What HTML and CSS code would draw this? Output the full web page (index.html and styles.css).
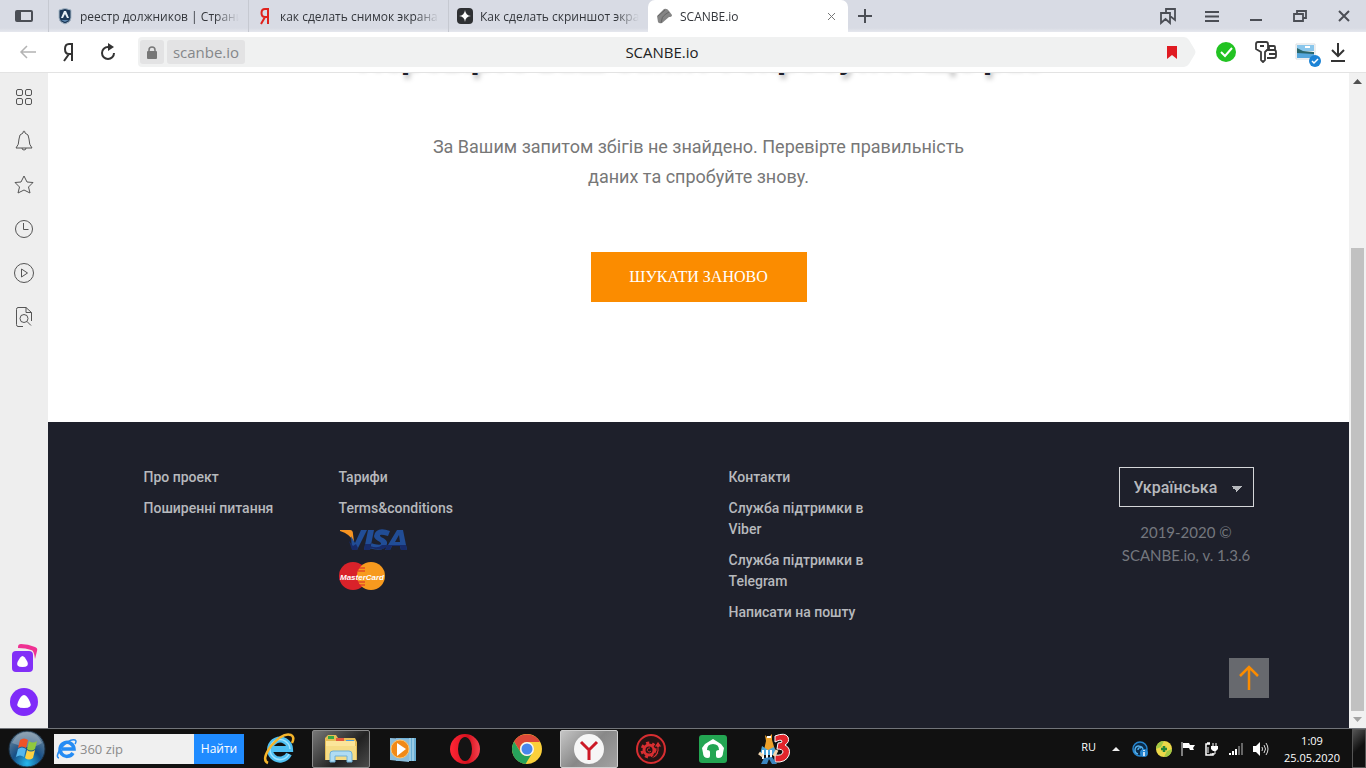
FILE: index.html
```
<!DOCTYPE html>
<html lang="uk">
<head>
    <meta charset="UTF-8">
    <meta name="viewport" content="width=device-width, initial-scale=1.0">
    <title>SCANBE.io</title>
    <link rel="stylesheet" href="styles.css">
</head>
<body>
    <!-- Tabs -->
    <header class="tabs">
        <button class="tabs-panel" aria-label="Панель">
            <svg width="18" height="12" viewBox="0 0 18 12"><rect x="1" y="1" width="16" height="10" rx="1" fill="none" stroke="#4b4e55" stroke-width="2"/><path d="M1 1h5v10H1z" fill="#4b4e55"/></svg>
        </button>
        <a class="tab" href="#">
            <svg width="16" height="16" viewBox="0 0 16 16"><path d="M2 2q6-3 12 0v8q0 4-6 6-6-2-6-6z" fill="#1d3858" stroke="#a9bac8"/><path d="M4 10l3-7h2l3 7h-2l-2-4-2 4z" fill="#e6eef5"/><path d="M4 12h8l-4 2z" fill="#5d86ad"/></svg>
            <span>реестр должников | Страница</span>
        </a>
        <a class="tab" href="#">
            <svg width="16" height="16" viewBox="0 0 16 16"><path d="M11 0v16M11 1H8Q4.500 1 4.500 5T8 9h3M8 9l-4 7" fill="none" stroke="#e0221c" stroke-width="2"/></svg>
            <span>как сделать снимок экрана на</span>
        </a>
        <a class="tab" href="#">
            <svg width="16" height="16" viewBox="0 0 16 16"><rect width="16" height="16" rx="4" fill="#2e3033"/><path d="M8 2q.5 5.500 6 6-5.500.5-6 6-.5-5.500-6-6 5.500-.5 6-6z" fill="#fff"/></svg>
            <span>Как сделать скриншот экрана</span>
        </a>
        <a class="tab active" href="#">
            <svg width="16" height="16" viewBox="0 0 16 16"><path d="M1 8l7-7q3-1 5 2l3 4q0 2-3 2L6 15q-3 1-4-1z" fill="#858585"/><path d="M2 8l7-6M6 11q0-3 7-7M6 11l-1 4" fill="none" stroke="#666"/></svg>
            <span>SCANBE.io</span>
            <svg width="9" height="9" viewBox="0 0 9 9"><path d="M1 1l7 7M8 1L1 8" stroke="#777"/></svg>
        </a>
        <button class="tab-new" aria-label="Новая вкладка">
            <svg width="14" height="14" viewBox="0 0 14 14"><path d="M7 0v14M0 7h14" stroke="#4b4e55" stroke-width="2"/></svg>
        </button>
        <div class="window-buttons">
            <button aria-label="Закладки"><svg width="16" height="16" viewBox="0 0 16 16"><path d="M1 5h9v10l-4.500-4L1 15zM6 5V1h9v11l-5-4" fill="none" stroke="#4b4e55" stroke-width="1.800"/></svg></button>
            <button aria-label="Меню"><svg width="14" height="11" viewBox="0 0 14 11"><path d="M0 1h14M0 5.500h14M0 10h14" stroke="#4b4e55" stroke-width="2"/></svg></button>
            <button aria-label="Свернуть"><svg width="12" height="12" viewBox="0 0 12 12"><path d="M0 10h12" stroke="#4b4e55" stroke-width="2"/></svg></button>
            <button aria-label="Восстановить"><svg width="14" height="12" viewBox="0 0 14 12"><path d="M1 4h9v7H1zM4 4V1h9v7h-3" fill="none" stroke="#4b4e55" stroke-width="1.800"/></svg></button>
            <button aria-label="Закрыть"><svg width="10" height="10" viewBox="0 0 10 10"><path d="M0 0l10 10M10 0L0 10" stroke="#4b4e55" stroke-width="2"/></svg></button>
        </div>
    </header>

    <!-- Address bar -->
    <nav class="toolbar">
        <button aria-label="Назад"><svg width="16" height="14" viewBox="0 0 16 14"><path d="M16 7H1M7 1L1 7l6 6" fill="none" stroke="#b3b3b3" stroke-width="1.500"/></svg></button>
        <button aria-label="Яндекс"><svg width="10" height="18" viewBox="0 0 10 18"><path d="M9 0v18M9 1H6Q2 1 2 6t4 5h3M6 11l-5 7" fill="none" stroke="#333" stroke-width="2"/></svg></button>
        <button aria-label="Обновить"><svg width="16" height="18" viewBox="0 0 16 18"><path d="M10 4H8a6 6 0 1 0 6 6" fill="none" stroke="#333" stroke-width="2"/><path d="M8 0l6 4-6 4z" fill="#333"/></svg></button>
        <div class="address">
            <button class="address-lock" aria-label="Защита"><svg width="10" height="13" viewBox="0 0 10 13"><path d="M2 6V4a3 3 0 0 1 6 0v2" fill="none" stroke="#777" stroke-width="1.500"/><rect y="5" width="10" height="8" rx="1" fill="#777"/></svg></button>
            <button class="address-host">scanbe.io</button>
            <input class="address-input" type="text" value="SCANBE.io" aria-label="Адрес">
            <button class="address-mark" aria-label="В закладках"><svg width="10" height="13" viewBox="0 0 10 13"><path d="M0 0h10v13L5 9l-5 4z" fill="#e01b22"/></svg></button>
            <svg class="address-tip" width="16" height="30" viewBox="0 0 16 30"><path d="M0 0h4q3 0 5 3l6 10q1 2 0 4L9 27q-2 3-5 3H0z" fill="#f0f1f1"/></svg>
        </div>
        <button aria-label="Protect"><svg width="20" height="20" viewBox="0 0 20 20"><circle cx="10" cy="10" r="10" fill="#22c322"/><path d="M5 10l4 4 7-8" fill="none" stroke="#fff" stroke-width="2"/></svg></button>
        <button aria-label="Пароли"><svg width="22" height="22" viewBox="0 0 22 22"><path d="M3 1h8q2 0 2 2v5l-3 3v8l-2 2-2-2v-8L1 8V3q0-2 2-2zM5 5h4M14 8V5h5q1 0 1 1v3M12 9h7q2 0 2 2v4q0 2-2 2h-7M14 13h7" fill="none" stroke="#3a3a3a" stroke-width="1.800" stroke-linejoin="round"/></svg></button>
        <button aria-label="Снимок"><svg width="22" height="24" viewBox="0 0 22 24"><path d="M1 4h19v15H1z" fill="#fff" stroke="#d8dde0"/><path d="M2 5h17v6H2z" fill="#8ac7ec"/><path d="M2 8l6 3 11 1v3H2z" fill="#28666c"/><path d="M2 13l17 1v4H2z" fill="#56a7dc"/><path d="M10 7h5" stroke="#fff" stroke-width="2"/><circle cx="20" cy="21" r="6" fill="#1b83d6"/><path d="M17 21l2 2 4-4" fill="none" stroke="#fff" stroke-width="1.500"/></svg></button>
        <button class="toolbar-load" aria-label="Загрузки"><svg width="14" height="19" viewBox="0 0 14 19"><path d="M7 0v13M1 7l6 6 6-6M0 18h14" fill="none" stroke="#333" stroke-width="2"/></svg></button>
    </nav>

    <div class="content">
        <aside class="sidebar">
            <button aria-label="Табло"><svg width="20" height="20" viewBox="0 0 20 20"><rect x="2.500" y="2.500" width="6" height="6" rx="1.500"/><rect x="11.500" y="2.500" width="6" height="6" rx="1.500"/><rect x="2.500" y="11.500" width="6" height="6" rx="1.500"/><rect x="11.500" y="11.500" width="6" height="6" rx="1.500"/></svg></button>
            <button aria-label="Уведомления"><svg width="20" height="20" viewBox="0 0 20 20"><path d="M2 17q3-3 3-9 0-5 4-6 0-2 1-2t1 2q4 1 4 6 0 6 3 9zM8 17q0 2 2 2t2-2"/></svg></button>
            <button aria-label="Избранное"><svg width="20" height="20" viewBox="0 0 20 20"><path d="M10 1l3 6 6 .5-4.500 4.500L16 18l-6-3-6 3 1.500-6L1 7.500 7 7z" stroke-linejoin="round"/></svg></button>
            <button aria-label="История"><svg width="20" height="20" viewBox="0 0 20 20"><circle cx="10" cy="10" r="8.500"/><path d="M9.500 4v6.500h5"/></svg></button>
            <button aria-label="Видео"><svg width="20" height="20" viewBox="0 0 20 20"><circle cx="10" cy="10" r="9.500"/><path d="M7.500 6v8l6-4z"/></svg></button>
            <button aria-label="Поиск на странице"><svg width="20" height="20" viewBox="0 0 20 20"><path d="M9 19.500H4q-1.500 0-1.500-2V2.500q0-2 1.500-2h8l5.500 5V14M12 .5v5h5.500"/><circle cx="10" cy="11.500" r="4"/><path d="M13 14.500l4 4"/></svg></button>
            <button class="sidebar-bottom" aria-label="Коллекции"><svg width="28" height="30" viewBox="0 0 28 30"><path d="M8 4q0-3 3-3 7 0 14 3 3 1 2 4l-2 8q-1-9-4-9Q16 5 8 5z" fill="#ef3192" stroke="none"/><rect x="2" y="8" width="21" height="21" rx="4" fill="#8230f7" stroke="none"/><path d="M12.500 13q2 0 5 6 2 5-5 5t-5-5q3-6 5-6z" fill="#fff" stroke="none"/></svg></button>
            <button aria-label="Алиса"><svg width="28" height="28" viewBox="0 0 28 28"><circle cx="14" cy="14" r="14" fill="#7f2bf9" stroke="none"/><path d="M14 7q3 0 6 7 3 6-6 6t-6-6q3-7 6-7z" fill="#fff" stroke="none"/></svg></button>
        </aside>

        <div class="page">
            <section class="result">
                <h1>Перевірте ваш запит і спробуйте ще раз</h1>
                <p>За Вашим запитом збігів не знайдено. Перевірте правильність даних та спробуйте знову.</p>
                <button class="search-again">ШУКАТИ ЗАНОВО</button>
            </section>

            <footer class="footer">
                <div class="footer-grid">
                    <div class="footer-col">
                        <a href="#">Про проект</a>
                        <a href="#">Поширенні питання</a>
                    </div>
                    <div class="footer-col">
                        <a href="#">Тарифи</a>
                        <a href="#">Terms&amp;conditions</a>
                        <div class="cards">
                            <svg width="70" height="22" viewBox="0 0 70 22" role="img" aria-label="Visa"><path d="M1 1h10q3 0 3 4l1 8q-4-8-14-11z" fill="#f79421"/><path d="M12 7l4 7 6-13h6L18 21h-5zM29 1h6l-4 20h-6zM51 2q-14-5-16 5 0 3 6 6 4 4-6 2l-3-1-2 5q15 5 18-4 1-4-6-7-4-4 7-1zM46 21L58 1h6l4 20h-6l-1-4h-8l-2 4zM56 13h5l-1-7z" fill="#214d96"/><path d="M10 12l4 5 3-2 2 4-1 2h-5zM26 15h6l-1 6h-6zM31 17q8 3 12-1h6q-4 7-17 3zM49 16h18l1 5h-6l-1-4h-8l-2 4h-5z" fill="#172b69"/></svg>
                            <svg width="46" height="28" viewBox="0 0 46 28" role="img" aria-label="MasterCard"><circle cx="14" cy="14" r="14" fill="#d9222a"/><circle cx="32" cy="14" r="14" fill="#f79a1e"/><path d="M19 6h7M19 9h7M19 20h7M19 23h7" stroke="#d9222a"/><text x="23" y="18" text-anchor="middle" class="mc">MasterCard</text></svg>
                        </div>
                    </div>
                    <div class="footer-col contacts">
                        <a href="#">Контакти</a>
                        <a href="#">Служба підтримки в Viber</a>
                        <a href="#">Служба підтримки в Telegram</a>
                        <a href="#">Написати на пошту</a>
                    </div>
                    <div class="footer-col lang">
                        <select aria-label="Мова">
                            <option>Українська</option>
                            <option>Русский</option>
                            <option>English</option>
                        </select>
                        <p>2019-2020 © SCANBE.io, v. 1.3.6</p>
                    </div>
                </div>
                <a class="to-top" href="#" aria-label="Вгору"><svg width="20" height="26" viewBox="0 0 20 26"><path d="M10 25V2M1 11l9-9 9 9" fill="none" stroke="#fb8c00" stroke-width="2.500"/></svg></a>
            </footer>
        </div>

        <div class="scroll">
            <svg width="9" height="5" viewBox="0 0 9 5"><path d="M0 5l4.500-5L9 5z" fill="#505050"/></svg>
            <div class="scroll-thumb"></div>
            <svg width="9" height="5" viewBox="0 0 9 5"><path d="M0 0l4.500 5L9 0z" fill="#a3a3a3"/></svg>
        </div>
    </div>

    <!-- Taskbar -->
    <div class="taskbar">
        <button class="start" aria-label="Пуск">
            <svg width="38" height="38" viewBox="0 0 38 38"><defs><radialGradient id="orb" cx=".5" cy=".9" r=".9"><stop offset="0" stop-color="#25b9ef"/><stop offset=".45" stop-color="#174f86"/><stop offset="1" stop-color="#71899b"/></radialGradient></defs><circle cx="19" cy="19" r="18" fill="url(#orb)" stroke="#1b3043"/><path d="M4 13Q9 2 19 2t15 11q-7 5-15 4T4 13z" fill="#fff" opacity=".25"/><path d="M12 10q4-3 8 0l-2 8q-4-3-8 0z" fill="#ee5328"/><path d="M21 11q4 3 8 0l-2 8q-4 3-8 0z" fill="#91c83e"/><path d="M10 19q4-3 8 0l-2 8q-4-3-8 0z" fill="#55b7ed"/><path d="M19 20q4 3 8 0l-2 8q-4 3-8 0z" fill="#ffd141"/></svg>
        </button>
        <form class="task-search">
            <svg width="22" height="20" viewBox="0 0 22 20"><path d="M17 14a7 7 0 1 1 1-4H6" fill="none" stroke="#258cf4" stroke-width="3.500"/><path d="M3 19Q-1 18 5 9 14-1 19 1q2 1 0 4" fill="none" stroke="#258cf4" stroke-width="1.500"/></svg>
            <input type="text" placeholder="360 zip" aria-label="Поиск">
            <button type="button">Найти</button>
        </form>
        <div class="apps">
            <button class="app" aria-label="Internet Explorer"><svg width="32" height="32" viewBox="0 0 32 32"><path d="M26 21a10 10 0 1 1 1-5H10" fill="none" stroke="#4fc0f2" stroke-width="6"/><path d="M26 21a10 10 0 1 1 1-5" fill="none" stroke="#9de3ff" stroke-width="1.500"/><path d="M5 30Q-2 27 8 13 20-1 28 2q4 2 1 8" fill="none" stroke="#f5b52b" stroke-width="2.500"/></svg></button>
            <button class="app open" aria-label="Проводник"><svg width="34" height="32" viewBox="0 0 34 32"><path d="M1 5l3-3h8l2 3h17l2 4v18H1z" fill="#e6bd55"/><path d="M4 3h6v3H4z" fill="#37a845"/><path d="M12 5h8v3h-8z" fill="#e4583c"/><path d="M22 7h8v3h-8z" fill="#4a9edc"/><path d="M2 8h29v18H2z" fill="#fbe59a"/><path d="M2 13h30v14H2z" fill="#f5dc86"/><path d="M6 29V21q0-3 3-3h16q3 0 3 3v8h-5v-6H11v6z" fill="#b0dcf3" stroke="#6eb0d8"/></svg></button>
            <button class="app" aria-label="Windows Media Player"><svg width="28" height="28" viewBox="0 0 28 28"><path d="M7 3h20v23H7z" fill="#68add4"/><path d="M24 3v23M21 3v23" stroke="#c6e7f6"/><path d="M1 3l19 1v23L1 25z" fill="#8bbddc"/><circle cx="11" cy="14" r="9" fill="#f18a18" stroke="#ffc46b"/><path d="M8 8l9 6-9 7z" fill="#fff"/></svg></button>
            <button class="app" aria-label="Opera"><svg width="30" height="30" viewBox="0 0 30 30"><defs><linearGradient id="op"><stop stop-color="#ff2636"/><stop offset=".6" stop-color="#d5101d"/><stop offset="1" stop-color="#f74350"/></linearGradient></defs><circle cx="15" cy="15" r="15" fill="url(#op)"/><ellipse cx="15" cy="15" rx="7" ry="12" fill="#141414"/></svg></button>
            <button class="app" aria-label="Chrome"><svg width="30" height="30" viewBox="0 0 30 30"><circle cx="15" cy="15" r="15" fill="#fbd03b"/><path d="M2 7.500A15 15 0 0 1 28 8H15a7 7 0 0 0-6.500 10z" fill="#dc4838"/><path d="M2 7.500A15 15 0 0 0 13.500 30L20 19.500A7 7 0 0 1 9 19z" fill="#27a25b"/><circle cx="15" cy="15" r="7" fill="#f6f6f6"/><circle cx="15" cy="15" r="5.500" fill="#4787ec"/></svg></button>
            <button class="app open current" aria-label="Яндекс.Браузер"><svg width="30" height="30" viewBox="0 0 30 30"><circle cx="15" cy="15" r="15" fill="#f6f6f6"/><path d="M7 8l8 8 8-8M15 15v11" fill="none" stroke="#cc1926" stroke-width="3"/></svg></button>
            <button class="app" aria-label="Driver Booster"><svg width="30" height="30" viewBox="0 0 30 30"><circle cx="15" cy="15" r="14" fill="#241414" stroke="#d72e31" stroke-width="2"/><circle cx="13" cy="16" r="5" fill="none" stroke="#d72e31" stroke-width="3"/><circle cx="13" cy="16" r="7" fill="none" stroke="#d72e31" stroke-width="3" stroke-dasharray="3 3"/><path d="M15 24q7-4 6-11h-3l4-6 4 6h-3q1 8-5 11z" fill="#d72e31" stroke="#241414"/><path d="M14 14a2 2 0 1 0 1 3" fill="none" stroke="#d72e31"/></svg></button>
            <button class="app" aria-label="Наушники"><svg width="28" height="28" viewBox="0 0 28 28"><rect width="28" height="28" rx="3" fill="#23a552"/><path d="M9 23q-5 0-5-5l-1-5 3-4 8-5 8 5 3 4-1 5q0 5-5 5-2 0-2-2v-4q0-2 3-2 0-6-6-6t-6 6q3 0 3 2v4q0 2-2 2z" fill="#fff"/></svg></button>
            <button class="app" aria-label="Игра"><svg width="34" height="32" viewBox="0 0 34 32"><path d="M17 3q10-4 13 1 2 5-3 8 6 3 4 10-3 8-14 7v-7q7 1 8-3 0-3-6-3l1-6q5 0 4-2-1-2-7 1z" fill="#e3242b" stroke="#fff"/><path d="M7 2l3 3 4-4v6l3 10H6L8 8z" fill="#eda12a"/><path d="M4 13l6 4 6-3 3 8H2z" fill="#4ca5da"/><path d="M5 17v9M9 17v9M13 17v9" stroke="#fff" stroke-width="2"/><path d="M1 20l4 3M19 17l-3 6" stroke="#f3d7b0" stroke-width="3"/><path d="M6 25l-3 6h6l2-5 3 5h5l-5-7z" fill="#3b86c0"/><path d="M9 4h4" stroke="#fff" stroke-width="2"/></svg></button>
        </div>
        <div class="tray">
            <span class="tray-lang">RU</span>
            <button aria-label="Скрытые значки"><svg width="8" height="4" viewBox="0 0 8 4"><path d="M0 4l4-4 4 4z" fill="#eee"/></svg></button>
            <button aria-label="Сервис"><svg width="16" height="16" viewBox="0 0 16 16"><circle cx="8" cy="8" r="7" fill="#0b2b49" stroke="#2686d0" stroke-width="1.500"/><path d="M6 13a4 4 0 1 1 5-4v5M6 9q0-3 3-2" fill="none" stroke="#52aeea" stroke-width="1.500"/><circle cx="12" cy="12" r="4" fill="#2686d0"/><path d="M12 9v1M12 11v4" stroke="#fff" stroke-width="1.500"/></svg></button>
            <button aria-label="360"><svg width="16" height="16" viewBox="0 0 16 16"><circle cx="8" cy="8" r="8" fill="#edd849"/><path d="M0 8q1-8 8-8l-3 6zM16 8q-1 8-8 8l3-6z" fill="#a0c945"/><path d="M8 5v6M5 8h6" stroke="#248638" stroke-width="2.500"/></svg></button>
            <button aria-label="Центр поддержки"><svg width="14" height="14" viewBox="0 0 14 14"><path d="M1 0v14" stroke="#eee"/><path d="M2 1h6l1 2h5l-2 3 1 2H9L8 6H2z" fill="#fff"/></svg></button>
            <button aria-label="Питание"><svg width="14" height="14" viewBox="0 0 14 14"><path d="M5 2H1v11h7v-2M2 1h3" fill="none" stroke="#fff" stroke-width="1.500"/><path d="M6 4h7v3l-2 2H8L6 7z" fill="#fff"/><path d="M8 1v3M11 1v3M10 9v3H5M3 5v6" fill="none" stroke="#fff"/></svg></button>
            <button aria-label="Сеть"><svg width="14" height="12" viewBox="0 0 14 12"><path d="M1 10v2M4 8v4M7 6v6" stroke="#fff" stroke-width="2"/><path d="M10 3v9M13 0v12" stroke="#666" stroke-width="2"/></svg></button>
            <button aria-label="Громкость"><svg width="15" height="14" viewBox="0 0 15 14"><path d="M0 4h3l4-4v14l-4-4H0z" fill="#fff"/><path d="M9 5q1 2 0 4M11 3q3 4 0 8M13 1q4 6 0 12" fill="none" stroke="#ddd"/></svg></button>
            <time class="clock"><span>1:09</span><span>25.05.2020</span></time>
            <button class="show-desktop" aria-label="Свернуть все окна"></button>
        </div>
    </div>
</body>
</html>
```
FILE: styles.css
```
* {
    box-sizing: border-box;
}

body {
    margin: 0;
    height: 100vh;
    display: flex;
    flex-direction: column;
    overflow: hidden;
    background: #fff;
    font-family: "Open Sans", sans-serif;
    color: #333;
}

button {
    display: flex;
    align-items: center;
    justify-content: center;
    padding: 0;
    border: none;
    background: none;
    font-family: inherit;
    cursor: pointer;
}

input {
    font-family: inherit;
    border: none;
    outline: none;
}

a {
    color: inherit;
    text-decoration: none;
}

svg {
    flex-shrink: 0;
    overflow: visible;
}

/* Tabs */
.tabs {
    display: flex;
    flex-shrink: 0;
    height: 32px;
    background: linear-gradient(#d8dbe4 88%, #e6e8ee);
}

.tabs-panel {
    width: 48px;
}

.tab {
    display: flex;
    align-items: center;
    gap: 7px;
    width: 200px;
    padding: 0 9px 0 8px;
    border-left: 1px solid #c6c9d1;
    font-size: 12px;
    color: #33363b;
}

.tab span {
    flex: 1;
    overflow: hidden;
    white-space: nowrap;
    mask-image: linear-gradient(90deg, #000 85%, transparent);
}

.tab.active {
    gap: 8px;
    padding-right: 12px;
    background: #fff;
    border-left: none;
    border-radius: 7px 7px 0 0;
}

.tab-new {
    width: 34px;
}

.window-buttons {
    display: flex;
    margin-left: auto;
}

.window-buttons button {
    width: 44px;
}

/* Address bar */
.toolbar {
    display: flex;
    align-items: center;
    flex-shrink: 0;
    height: 41px;
    padding: 0 16px 0 8px;
    border-bottom: 1px solid #e3e3e3;
}

.toolbar > button {
    width: 40px;
    height: 40px;
}

.toolbar > .toolbar-load {
    width: 24px;
}

.address {
    display: flex;
    align-items: center;
    flex: 1;
    gap: 3px;
    height: 30px;
    margin: 0 10px;
    padding-left: 2px;
    background: linear-gradient(90deg, #f0f1f1 calc(100% - 16px), transparent 0);
    border-radius: 4px;
}

.address-lock,
.address-host {
    height: 24px;
    background: #e3e3e4;
    border-radius: 3px;
}

.address-lock {
    width: 24px;
}

.address-host {
    width: 78px;
    font-size: 15px;
    color: #85878a;
}

.address-input {
    flex: 1;
    min-width: 0;
    padding: 0 88px 0 0;
    background: none;
    font-size: 15px;
    text-align: center;
    color: #222;
}

/* Browser sidebar */
.content {
    display: flex;
    flex: 1;
    min-height: 0;
}

.sidebar {
    display: flex;
    flex-direction: column;
    width: 48px;
    padding: 2px 0 4px;
    background: #eee;
}

.sidebar button {
    height: 44px;
}

.sidebar svg {
    fill: none;
    stroke: #555;
}

.sidebar .sidebar-bottom {
    margin-top: auto;
}

/* Page, scrolled to its end */
.page {
    display: flex;
    flex: 1;
    flex-direction: column;
    justify-content: flex-end;
    min-width: 0;
    overflow: hidden;
    font-family: Roboto, sans-serif;
}

.result {
    display: flex;
    flex-direction: column;
    align-items: center;
    padding: 0 15px 120px;
    text-align: center;
}

.result h1 {
    margin: 0 0 55px;
    font-size: 36px;
    line-height: 44px;
    color: #1e202b;
    text-shadow: 2px 4px 5px rgba(0, 0, 0, 0.25);
}

.result p {
    max-width: 570px;
    margin: 0 0 60px;
    font-size: 18px;
    line-height: 30px;
    color: #777;
}

.search-again {
    width: 216px;
    height: 50px;
    background: #fb8c00;
    font-family: "Liberation Serif", serif;
    font-size: 16px;
    color: #fff;
}

.footer {
    flex-shrink: 0;
    padding: 45px 0 30px;
    background: #1e202b;
    color: #b7b9bd;
}

.footer-grid {
    display: grid;
    grid-template-columns: repeat(6, 1fr);
    max-width: 1170px;
    margin: 0 auto;
}

.footer-col {
    display: flex;
    flex-direction: column;
    gap: 10px;
    padding: 0 30px;
    font-size: 14px;
    font-weight: 500;
    line-height: 21px;
}

.contacts {
    grid-column: 4;
}

.lang {
    grid-column: 6;
    gap: 14px;
}

.cards {
    display: flex;
    flex-direction: column;
    gap: 11px;
}

.mc {
    font: italic bold 8px "Liberation Sans", sans-serif;
    fill: #fff;
}

.lang select {
    height: 40px;
    padding: 0 14px;
    appearance: none;
    border: 1px solid #d5d6d9;
    border-radius: 0;
    background-color: transparent;
    background-image: linear-gradient(to bottom left, #b7b9bd 50%, transparent 50%), linear-gradient(to bottom right, #b7b9bd 50%, transparent 50%);
    background-position: right 16px top 18px, right 10px top 18px;
    background-size: 6px 6px;
    background-repeat: no-repeat;
    font: 500 16px Roboto, sans-serif;
    color: #b7b9bd;
}

.lang p {
    margin: 0;
    font-family: Lato, sans-serif;
    font-size: 15px;
    font-weight: 400;
    line-height: 23px;
    text-align: center;
    color: #74777e;
}

.to-top {
    display: flex;
    align-items: center;
    justify-content: center;
    width: 40px;
    height: 40px;
    margin: 35px 80px 0 auto;
    background: #67696e;
}

/* Scrollbar */
.scroll {
    display: flex;
    flex-direction: column;
    align-items: center;
    width: 17px;
    padding: 6px 0;
    background: #f1f1f1;
}

.scroll-thumb {
    width: 13px;
    height: 72%;
    margin: auto 0 6px;
    background: #c1c1c1;
}

/* Taskbar */
.taskbar {
    display: flex;
    align-items: center;
    flex-shrink: 0;
    height: 40px;
    background: #111;
    border-top: 1px solid #717479;
}

.start {
    width: 54px;
}

.task-search {
    display: flex;
    align-items: center;
    width: 190px;
    height: 30px;
    padding-left: 2px;
    background: #f0f0f0;
}

.task-search input {
    flex: 1;
    min-width: 0;
    padding: 0 2px;
    background: none;
    font-size: 13px;
}

.task-search input::placeholder {
    color: #8b8b8b;
}

.task-search button {
    width: 50px;
    height: 30px;
    background: #1f8bff;
    font-size: 12px;
    color: #fff;
}

.apps {
    display: flex;
    gap: 4px;
    margin-left: 6px;
}

.app {
    width: 58px;
    height: 38px;
}

.app.open {
    border: 1px solid #8b8b8b;
    border-radius: 2px;
    background: linear-gradient(135deg, #777, #222 60%, #4a4a4a);
}

.app.current {
    border-color: #d0d0d0;
    background: linear-gradient(135deg, #c5c5c5, #888 50%, #a2a2a2);
}

.tray {
    display: flex;
    align-items: center;
    height: 100%;
    margin-left: auto;
    color: #fff;
    font-size: 12px;
}

.tray button {
    width: 24px;
}

.tray-lang {
    padding: 0 8px 4px 0;
    font-size: 11px;
}

.clock {
    display: flex;
    flex-direction: column;
    width: 80px;
    font-size: 11px;
    line-height: 17px;
    text-align: center;
}

.tray .show-desktop {
    width: 14px;
    height: 100%;
    border: 1px solid #555;
    background: linear-gradient(135deg, #555, #111 50%);
}
```
